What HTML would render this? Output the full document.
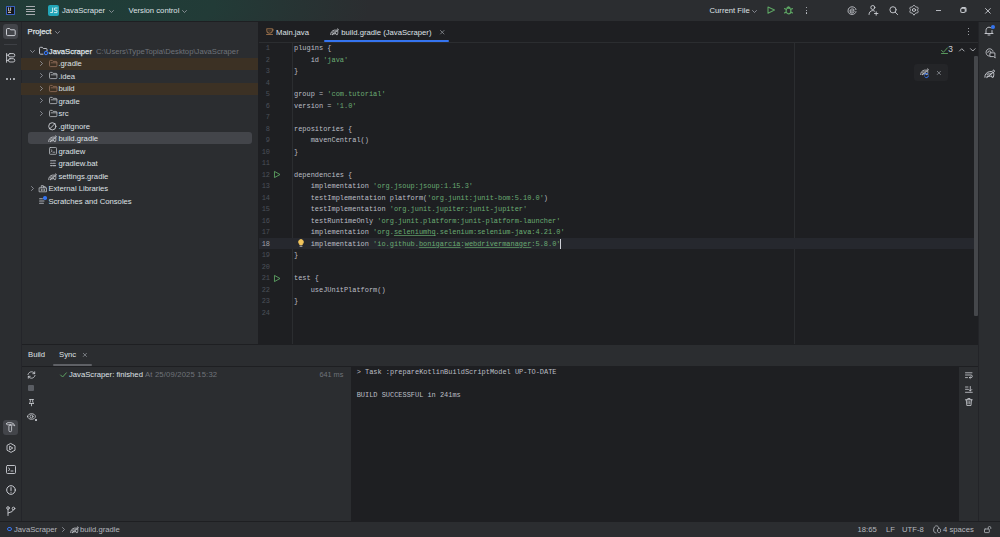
<!DOCTYPE html><html><head><meta charset="utf-8"><style>
*{margin:0;padding:0;box-sizing:border-box}
html,body{width:1000px;height:537px;overflow:hidden;background:#2B2D30;font-family:"Liberation Sans",sans-serif;font-size:7.7px;color:#DFE1E5}
.a{position:absolute}
.t{position:absolute;white-space:pre;line-height:8px;height:8px}
svg{position:absolute;overflow:visible}
svg *{fill:none;stroke-linecap:round;stroke-linejoin:round}
#title{left:0;top:0;width:1000px;height:22px;background:radial-gradient(ellipse 260px 75px at 110px 6px,#1f3d38 0%,#223b37 40%,#2B2D30 100%);border-bottom:1px solid #1E1F22}
#leftstrip{left:0;top:22px;width:22px;height:499px;background:#2B2D30;border-right:1px solid #24252A}
#proj{left:22px;top:22px;width:236px;height:322px;background:#2B2D30}
#editor{left:258px;top:22px;width:720px;height:322px;background:#1E1F22;border-left:1px solid #1E1F22}
#rightstrip{left:978px;top:22px;width:22px;height:499px;background:#2B2D30;border-left:1px solid #232428}
#bottom{left:22px;top:344px;width:956px;height:177px;background:#2B2D30;border-top:1px solid #1E1F22}
#console{left:351px;top:366px;width:607.5px;height:155px;background:#1E1F22}
#status{left:0;top:521px;width:1000px;height:16px;background:#2B2D30;border-top:1px solid #1E1F22}
.code{font-family:"Liberation Mono",monospace;font-size:6.95px;color:#BCBEC4}
.s{color:#6AAB73}
.ln{position:absolute;font-family:"Liberation Mono",monospace;font-size:6.95px;color:#4B5059;text-align:right;width:20px;line-height:8px;white-space:pre}
.g{color:#6F737A}
.ty{text-decoration:underline solid #4f7d57;text-decoration-thickness:1px;text-underline-offset:0.8px}
</style></head><body>
<div id="title" class="a"></div>
<div id="leftstrip" class="a"></div>
<div id="proj" class="a"></div>
<div id="editor" class="a"></div>
<div id="rightstrip" class="a"></div>
<div id="bottom" class="a"></div>
<div id="console" class="a"></div>
<div id="status" class="a"></div>
<div class="a" style="left:6px;top:6px;width:9px;height:9px;background:#141518;border:1px solid #3A62C0;border-radius:0.5px"></div>
<svg style="left:0px;top:0px" width="20" height="20" viewBox="0 0 20 20" stroke="#E6E6E6" stroke-width="0.8"><path d="M8.6 7.8 V10.8 M10.6 7.8 V10.5 Q10.6 11 10 11 H9.5"/></svg>
<div class="a" style="left:8px;top:12px;width:2.6px;height:0.9px;background:#C8B8A8"></div>
<div class="a" style="left:26.3px;top:6.2px;width:8.7px;height:1.2px;background:#A9ACB1"></div>
<div class="a" style="left:26.3px;top:8.9px;width:8.7px;height:1.2px;background:#A9ACB1"></div>
<div class="a" style="left:26.3px;top:11.2px;width:8.7px;height:1.2px;background:#A9ACB1"></div>
<div class="a" style="left:26.3px;top:13.5px;width:8.7px;height:1.2px;background:#A9ACB1"></div>
<div class="a" style="left:48px;top:5px;width:11px;height:10.7px;background:#22A6B8;border-radius:2px"></div>
<svg style="left:0px;top:0px" width="64" height="20" viewBox="0 0 64 20" stroke="#DDEFF1" stroke-width="0.9"><path d="M52.6 8 V12.5 H50.6 M57.1 8 H54.6 V10.3 H57 V12.6 H54.4"/></svg>
<div class="t " style="left:62px;top:6.5px;">JavaScraper</div>
<svg style="left:109px;top:9.5px" width="5" height="3" viewBox="0 0 5 3" stroke="#9DA0A8" stroke-width="0.8"><polyline points="0.5,0.5 2.5,2.5 4.5,0.5"/></svg>
<div class="t " style="left:128.5px;top:6.5px;">Version control</div>
<svg style="left:182px;top:9.5px" width="5" height="3" viewBox="0 0 5 3" stroke="#9DA0A8" stroke-width="0.8"><polyline points="0.5,0.5 2.5,2.5 4.5,0.5"/></svg>
<div class="t " style="left:709.5px;top:6.5px;">Current File</div>
<svg style="left:752px;top:9.5px" width="5" height="3" viewBox="0 0 5 3" stroke="#9DA0A8" stroke-width="0.8"><polyline points="0.5,0.5 2.5,2.5 4.5,0.5"/></svg>
<svg style="left:767px;top:6px" width="9" height="9" viewBox="0 0 9 9" stroke="#5DA463" stroke-width="1.1"><path d="M1 1 L7.5 4 L1 7.2 Z"/></svg>
<svg style="left:784px;top:6px" width="10" height="9" viewBox="0 0 10 9" stroke="#5DA463" stroke-width="1.2"><ellipse cx="4.5" cy="4.9" rx="2.4" ry="2.9"/><path d="M3.3 1.6 Q4.5 0.4 5.7 1.6 M2 3.3 L0.6 2.6 M7 3.3 L8.4 2.6 M2 6.2 L0.6 6.9 M7 6.2 L8.4 6.9" /><path d="M3.2 1.8 Q4.5 0.2 5.8 1.8 Z" style="fill:#5DA463"/></svg>
<div class="a" style="left:805.5px;top:6.8px;width:1.3px;height:1.3px;background:#C9CCD2;border-radius:1px"></div>
<div class="a" style="left:805.5px;top:9.6px;width:1.3px;height:1.3px;background:#C9CCD2;border-radius:1px"></div>
<div class="a" style="left:805.5px;top:12.4px;width:1.3px;height:1.3px;background:#C9CCD2;border-radius:1px"></div>
<svg style="left:846.8px;top:6.3px" width="10" height="9" viewBox="0 0 10 9" stroke="#CED0D6" stroke-width="0.85"><path d="M1 4.5 C1 2 3.3 0.8 5 0.8 C7 0.8 9 2 9 3.6 M3 4.6 C3 3.3 4.5 2.8 6 3 C7.5 3.2 7.5 4.8 6 5 H4 C2.5 5.2 2.6 6.7 4 6.9 C5.5 7.1 7 6.7 7.2 5.6 M1 5.4 C1.2 7.4 3 8.4 5 8.4 C7 8.4 8.8 7.4 9 5.6"/></svg>
<svg style="left:868px;top:5.3px" width="11" height="11" viewBox="0 0 11 11" stroke="#CED0D6" stroke-width="0.9"><circle cx="4.8" cy="2.5" r="2"/><path d="M1 9.5 C1 7.2 2.5 5.6 4.8 5.6 C5.5 5.6 6.2 5.8 6.6 6.1 M8.2 6.8 V10.2 M6.5 8.5 H9.9"/></svg>
<svg style="left:889px;top:6px" width="10" height="10" viewBox="0 0 10 10" stroke="#CED0D6" stroke-width="0.9"><circle cx="4" cy="3.8" r="3.1"/><path d="M6.3 6.2 L8.6 8.6"/></svg>
<svg style="left:909px;top:5.3px" width="10" height="10" viewBox="0 0 10 10" stroke="#CED0D6" stroke-width="0.9"><path d="M5.00 9.65 L4.60 9.56 L4.24 9.31 L3.94 8.96 L3.69 8.59 L3.47 8.28 L3.23 8.07 L2.92 7.97 L2.54 7.93 L2.10 7.90 L1.65 7.81 L1.25 7.62 L0.97 7.33 L0.85 6.93 L0.89 6.50 L1.04 6.06 L1.23 5.66 L1.39 5.32 L1.45 5.00 L1.39 4.68 L1.23 4.34 L1.04 3.94 L0.89 3.50 L0.85 3.07 L0.97 2.68 L1.25 2.38 L1.65 2.19 L2.10 2.10 L2.54 2.07 L2.92 2.03 L3.22 1.93 L3.47 1.72 L3.69 1.41 L3.94 1.04 L4.24 0.69 L4.60 0.44 L5.00 0.35 L5.40 0.44 L5.76 0.69 L6.06 1.04 L6.31 1.41 L6.53 1.72 L6.78 1.93 L7.08 2.03 L7.46 2.07 L7.90 2.10 L8.35 2.19 L8.75 2.38 L9.03 2.67 L9.15 3.07 L9.11 3.50 L8.96 3.94 L8.77 4.34 L8.61 4.68 L8.55 5.00 L8.61 5.32 L8.77 5.66 L8.96 6.06 L9.11 6.50 L9.15 6.93 L9.03 7.32 L8.75 7.62 L8.35 7.81 L7.90 7.90 L7.46 7.93 L7.08 7.97 L6.77 8.07 L6.53 8.28 L6.31 8.59 L6.06 8.96 L5.76 9.31 L5.40 9.56 L5.00 9.65Z"/><ellipse cx="5" cy="5" rx="1.7" ry="1.4"/></svg>
<div class="a" style="left:935.8px;top:9.6px;width:5.4px;height:1.4px;background:#B4B7BD"></div>
<svg style="left:959.8px;top:7.4px" width="7" height="6" viewBox="0 0 7 6" stroke="#C4C7CC" stroke-width="1.1"><rect x="0.7" y="1.3" width="4.6" height="4.2" rx="1.4"/><path d="M2 0.6 H4.8 Q6 0.6 6 1.8 V4.2"/></svg>
<svg style="left:984.6px;top:7.5px" width="6" height="6" viewBox="0 0 6 6" stroke="#CED0D6" stroke-width="0.9"><path d="M0.5 0.5 L5.3 5.3 M5.3 0.5 L0.5 5.3"/></svg>
<div class="a" style="left:3px;top:24px;width:15px;height:15px;background:#43454A;border-radius:3px"></div>
<svg style="left:5.5px;top:27.8px" width="10" height="9" viewBox="0 0 10 9" stroke="#CED0D6" stroke-width="1"><path d="M0.5 1.5 Q0.5 0.5 1.5 0.5 H3.6 L4.6 1.8 H8.2 Q9.2 1.8 9.2 2.8 V6.6 Q9.2 7.6 8.2 7.6 H1.5 Q0.5 7.6 0.5 6.6 Z"/></svg>
<div class="a" style="left:4px;top:44px;width:13px;height:1px;background:#3E4045"></div>
<svg style="left:6px;top:53.3px" width="10" height="10" viewBox="0 0 10 10" stroke="#CED0D6" stroke-width="0.9"><path d="M0.6 0.5 V9.3 M0.6 2.2 H2.4 M0.6 7.4 H2.4"/><rect x="2.4" y="0.6" width="6.4" height="3.3" rx="1.65"/><rect x="2.4" y="5.7" width="6.4" height="3.3" rx="1.65"/></svg>
<div class="a" style="left:6px;top:78px;width:1.9px;height:1.9px;background:#CED0D6;border-radius:1px"></div>
<div class="a" style="left:9.6px;top:78px;width:1.9px;height:1.9px;background:#CED0D6;border-radius:1px"></div>
<div class="a" style="left:13.2px;top:78px;width:1.9px;height:1.9px;background:#CED0D6;border-radius:1px"></div>
<div class="a" style="left:3px;top:420px;width:15px;height:15px;background:#43454A;border-radius:3px"></div>
<svg style="left:6px;top:422px" width="10" height="11" viewBox="0 0 10 11" stroke="#CED0D6" stroke-width="0.85"><path d="M0.6 1.8 Q0.6 0.7 1.6 0.7 H5 Q8 0.9 8.8 3.8 Q7.2 2.7 5.6 2.8 H1.6 Q0.6 2.8 0.6 1.8 Z"/><rect x="2.9" y="2.9" width="2.7" height="6.8" rx="1.3"/></svg>
<svg style="left:5.5px;top:443px" width="10" height="10" viewBox="0 0 10 10" stroke="#CED0D6" stroke-width="0.9"><path d="M5 0.6 L9 2.8 V7.2 L5 9.4 L1 7.2 V2.8 Z"/><path d="M4 3.3 L6.8 5 L4 6.7 Z"/></svg>
<svg style="left:5.5px;top:464.5px" width="10" height="9" viewBox="0 0 10 9" stroke="#CED0D6" stroke-width="0.9"><rect x="0.5" y="0.5" width="9" height="8" rx="1"/><path d="M2.5 3 L4 4.3 L2.5 5.6 M5 6 H7"/></svg>
<svg style="left:5.5px;top:485px" width="10" height="10" viewBox="0 0 10 10" stroke="#CED0D6" stroke-width="1"><circle cx="5" cy="5" r="4.3"/><path d="M5 2.6 V5.5 M5 7.2 V7.3"/></svg>
<svg style="left:6px;top:505.5px" width="10" height="10" viewBox="0 0 10 10" stroke="#CED0D6" stroke-width="0.9"><circle cx="2" cy="2" r="1.3"/><circle cx="7.5" cy="2.5" r="1.3"/><path d="M2 3.3 V9.5 M7.5 3.8 Q7.5 6 2.2 7"/></svg>
<div class="t " style="left:27.5px;top:28px;font-size:7.7px;-webkit-text-stroke:0.25px #DFE1E5">Project</div>
<svg style="left:55px;top:30.8px" width="5" height="3" viewBox="0 0 5 3" stroke="#9DA0A8" stroke-width="0.8"><polyline points="0.5,0.5 2.5,2.5 4.5,0.5"/></svg>
<div class="a" style="left:21px;top:57.5px;width:237px;height:12.5px;background:#3C3124"></div>
<div class="a" style="left:21px;top:82.5px;width:237px;height:12.5px;background:#3C3124"></div>
<div class="a" style="left:28px;top:132.2px;width:224px;height:12.3px;background:#43454A;border-radius:3px"></div>
<svg style="left:30px;top:49.5px" width="5" height="3" viewBox="0 0 5 3" stroke="#9DA0A8" stroke-width="0.8"><polyline points="0.5,0.5 2.5,2.5 4.5,0.5"/></svg>
<svg style="left:39px;top:47.1px" width="10" height="8" viewBox="0 0 10 8" stroke="#CED0D6" stroke-width="0.9"><path d="M4 7.2 H1.5 Q0.5 7.2 0.5 6.2 V1.3 Q0.5 0.3 1.5 0.3 H3.3 L4.3 1.5 H7 Q8 1.5 8 2.5 V3.8"/></svg>
<svg style="left:43.6px;top:50.900000000000006px" width="5" height="5" viewBox="0 0 5 5" stroke="#3574F0" stroke-width="1.1"><circle cx="2" cy="2" r="1.6"/></svg>
<div class="t " style="left:48.8px;top:47.5px;font-size:7.7px;-webkit-text-stroke:0.25px #DFE1E5">JavaScraper</div>
<div class="t g" style="left:96px;top:47.7px;">C:\Users\TypeTopia\Desktop\JavaScraper</div>
<svg style="left:39.8px;top:60.900000000000006px" width="3" height="5" viewBox="0 0 3 5" stroke="#9DA0A8" stroke-width="0.8"><polyline points="0.5,0.5 2.5,2.5 0.5,4.5"/></svg>
<svg style="left:48.5px;top:59.900000000000006px" width="9" height="7" viewBox="0 0 9 7" stroke="#94705A" stroke-width="0.8"><path d="M0.5 1.3 Q0.5 0.4 1.4 0.4 H3.2 L4.1 1.4 H7 Q7.9 1.4 7.9 2.3 V5.7 Q7.9 6.6 7 6.6 H1.4 Q0.5 6.6 0.5 5.7 Z M2.2 2.8 H7.9"/></svg>
<div class="t " style="left:58.4px;top:60.0px;color:#DFE1E5">.gradle</div>
<svg style="left:39.8px;top:73.4px" width="3" height="5" viewBox="0 0 3 5" stroke="#9DA0A8" stroke-width="0.8"><polyline points="0.5,0.5 2.5,2.5 0.5,4.5"/></svg>
<svg style="left:48.5px;top:72.4px" width="9" height="7" viewBox="0 0 9 7" stroke="#B9BCC2" stroke-width="0.8"><path d="M0.5 1.3 Q0.5 0.4 1.4 0.4 H3.2 L4.1 1.4 H7 Q7.9 1.4 7.9 2.3 V5.7 Q7.9 6.6 7 6.6 H1.4 Q0.5 6.6 0.5 5.7 Z M2.2 2.8 H7.9"/></svg>
<div class="t " style="left:58.4px;top:72.5px;color:#DFE1E5">.idea</div>
<svg style="left:39.8px;top:85.9px" width="3" height="5" viewBox="0 0 3 5" stroke="#9DA0A8" stroke-width="0.8"><polyline points="0.5,0.5 2.5,2.5 0.5,4.5"/></svg>
<svg style="left:48.5px;top:84.9px" width="9" height="7" viewBox="0 0 9 7" stroke="#94705A" stroke-width="0.8"><path d="M0.5 1.3 Q0.5 0.4 1.4 0.4 H3.2 L4.1 1.4 H7 Q7.9 1.4 7.9 2.3 V5.7 Q7.9 6.6 7 6.6 H1.4 Q0.5 6.6 0.5 5.7 Z M2.2 2.8 H7.9"/></svg>
<div class="t " style="left:58.4px;top:85.0px;color:#DFE1E5">build</div>
<svg style="left:39.8px;top:98.4px" width="3" height="5" viewBox="0 0 3 5" stroke="#9DA0A8" stroke-width="0.8"><polyline points="0.5,0.5 2.5,2.5 0.5,4.5"/></svg>
<svg style="left:48.5px;top:97.4px" width="9" height="7" viewBox="0 0 9 7" stroke="#B9BCC2" stroke-width="0.8"><path d="M0.5 1.3 Q0.5 0.4 1.4 0.4 H3.2 L4.1 1.4 H7 Q7.9 1.4 7.9 2.3 V5.7 Q7.9 6.6 7 6.6 H1.4 Q0.5 6.6 0.5 5.7 Z M2.2 2.8 H7.9"/></svg>
<div class="t " style="left:58.4px;top:97.5px;color:#DFE1E5">gradle</div>
<svg style="left:39.8px;top:110.9px" width="3" height="5" viewBox="0 0 3 5" stroke="#9DA0A8" stroke-width="0.8"><polyline points="0.5,0.5 2.5,2.5 0.5,4.5"/></svg>
<svg style="left:48.5px;top:109.9px" width="9" height="7" viewBox="0 0 9 7" stroke="#B9BCC2" stroke-width="0.8"><path d="M0.5 1.3 Q0.5 0.4 1.4 0.4 H3.2 L4.1 1.4 H7 Q7.9 1.4 7.9 2.3 V5.7 Q7.9 6.6 7 6.6 H1.4 Q0.5 6.6 0.5 5.7 Z M2.2 2.8 H7.9"/></svg>
<div class="t " style="left:58.4px;top:110.0px;color:#DFE1E5">src</div>
<svg style="left:48px;top:121.7px" width="9" height="9" viewBox="0 0 9 9" stroke="#CED0D6" stroke-width="0.9"><circle cx="4.3" cy="4.3" r="3.6"/><path d="M1.8 6.8 L6.8 1.8"/></svg>
<div class="t " style="left:58.4px;top:122.5px;color:#DFE1E5">.gitignore</div>
<svg style="left:48px;top:135.2px" width="10" height="8" viewBox="0 0 10 8" stroke="#CED0D6" stroke-width="0.8"><path d="M0.7 6.6 C0.5 4.3 2.2 2.4 4.6 2.1 C6 1.9 7 2.3 7.6 2.9 C8.4 2.4 8.6 1.4 8 0.9 C7.6 0.6 7.1 0.9 7.2 1.3 M7.6 2.9 C8.1 3.6 7.9 5.2 7.4 6.6 H6.3 L6 5.5 C4.8 6 3.7 6 2.7 5.6 L2.3 6.6 Z M2.5 4.2 C3.5 3.6 5 4.2 6 3.8"/></svg>
<div class="t " style="left:58.4px;top:135.0px;color:#DFE1E5">build.gradle</div>
<svg style="left:48.5px;top:147.1px" width="9" height="9" viewBox="0 0 9 9" stroke="#B9BCC2" stroke-width="0.8"><rect x="0.5" y="0.5" width="7" height="6.8" rx="0.8"/><path d="M2 2.6 L3.2 3.7 L2 4.8 M4 5.2 H5.8"/></svg>
<div class="t " style="left:58.4px;top:147.5px;color:#DFE1E5">gradlew</div>
<svg style="left:49.7px;top:159.89999999999998px" width="8" height="8" viewBox="0 0 8 8" stroke="#A9ACB2" stroke-width="1.1"><path d="M0.6 0.8 H5.6 M0.6 3.2 H2.2 M3.2 3.2 H5.2 M0.6 5.6 H2.2 M3.2 5.6 H5.6"/></svg>
<div class="t " style="left:58.4px;top:160.0px;color:#DFE1E5">gradlew.bat</div>
<svg style="left:48px;top:172.7px" width="10" height="8" viewBox="0 0 10 8" stroke="#CED0D6" stroke-width="0.8"><path d="M0.7 6.6 C0.5 4.3 2.2 2.4 4.6 2.1 C6 1.9 7 2.3 7.6 2.9 C8.4 2.4 8.6 1.4 8 0.9 C7.6 0.6 7.1 0.9 7.2 1.3 M7.6 2.9 C8.1 3.6 7.9 5.2 7.4 6.6 H6.3 L6 5.5 C4.8 6 3.7 6 2.7 5.6 L2.3 6.6 Z M2.5 4.2 C3.5 3.6 5 4.2 6 3.8"/></svg>
<div class="t " style="left:58.4px;top:172.5px;color:#DFE1E5">settings.gradle</div>
<svg style="left:38.5px;top:184.6px" width="9" height="8" viewBox="0 0 9 8" stroke="#B9BCC2" stroke-width="0.8"><path d="M0.5 2.8 H7.5 V6.8 H0.5 Z M2.3 2.8 V0.6 H4.3 V2.8 M4.3 1.6 H6.2 V2.8 M2.4 4.3 V5.6 M4 4.3 V5.6 M5.6 4.3 V5.6"/></svg>
<div class="t " style="left:48.4px;top:185.0px;color:#DFE1E5">External Libraries</div>
<svg style="left:30.5px;top:185.7px" width="3" height="5" viewBox="0 0 3 5" stroke="#9DA0A8" stroke-width="0.8"><polyline points="0.5,0.5 2.5,2.5 0.5,4.5"/></svg>
<svg style="left:39.3px;top:197.7px" width="8" height="8" viewBox="0 0 8 8" stroke="#A9ACB2" stroke-width="1.1"><path d="M0.6 0.8 H3.4 M0.6 3 H5 M0.6 5.2 H4.4"/></svg>
<div class="a" style="left:43px;top:196.1px;width:3.6px;height:3.6px;background:#3574F0;border-radius:50%"></div>
<div class="t " style="left:48.4px;top:197.5px;color:#DFE1E5">Scratches and Consoles</div>
<svg style="left:266px;top:28px" width="8" height="8" viewBox="0 0 8 8" stroke="#8E6846" stroke-width="1.1"><path d="M0.8 0.7 H6.3 V2.6 Q6.3 5.2 3.55 5.2 Q0.8 5.2 0.8 2.6 Z M6.3 1 Q7.4 1.2 6.9 2.6 M0.6 6.5 H6.5"/><path d="M2 1.8 H5.1 Q5 4 3.55 4 Q2.1 4 2 1.8Z" style="fill:#4a3a2c" stroke="none"/></svg>
<div class="t " style="left:276px;top:28.5px;color:#DFE1E5">Main.java</div>
<svg style="left:330px;top:28px" width="10" height="8" viewBox="0 0 10 8" stroke="#CED0D6" stroke-width="0.8"><path d="M0.7 6.6 C0.5 4.3 2.2 2.4 4.6 2.1 C6 1.9 7 2.3 7.6 2.9 C8.4 2.4 8.6 1.4 8 0.9 C7.6 0.6 7.1 0.9 7.2 1.3 M7.6 2.9 C8.1 3.6 7.9 5.2 7.4 6.6 H6.3 L6 5.5 C4.8 6 3.7 6 2.7 5.6 L2.3 6.6 Z M2.5 4.2 C3.5 3.6 5 4.2 6 3.8"/></svg>
<div class="t " style="left:341.3px;top:28.5px;color:#DFE1E5">build.gradle (JavaScraper)</div>
<svg style="left:439.5px;top:29.5px" width="5" height="5" viewBox="0 0 5 5" stroke="#8C8F96" stroke-width="0.8"><path d="M0.5 0.5 L4 4 M4 0.5 L0.5 4"/></svg>
<div class="a" style="left:324px;top:40.3px;width:125px;height:2px;background:#3574F0;border-radius:1px"></div>
<div class="a" style="left:259px;top:42px;width:719px;height:1px;background:#2B2D30"></div>
<div class="a" style="left:967.5px;top:28px;width:1.2px;height:1.2px;background:#C9CCD2;border-radius:1px"></div>
<div class="a" style="left:967.5px;top:30.8px;width:1.2px;height:1.2px;background:#C9CCD2;border-radius:1px"></div>
<div class="a" style="left:967.5px;top:33.6px;width:1.2px;height:1.2px;background:#C9CCD2;border-radius:1px"></div>
<div class="a" style="left:292px;top:43px;width:1px;height:301px;background:#2B2D30"></div>
<div class="a" style="left:794px;top:43px;width:1px;height:301px;background:#2B2D30"></div>
<div class="a" style="left:259px;top:237.75px;width:715px;height:11.5px;background:#26282E"></div>
<div class="ln" style="left:250px;top:44.0px;color:#4B5059">1</div>
<div class="t code" style="left:294px;top:44.0px">plugins {</div>
<div class="ln" style="left:250px;top:55.5px;color:#4B5059">2</div>
<div class="t code" style="left:294px;top:55.5px">    id <span class="s">'java'</span></div>
<div class="ln" style="left:250px;top:67.0px;color:#4B5059">3</div>
<div class="t code" style="left:294px;top:67.0px">}</div>
<div class="ln" style="left:250px;top:78.5px;color:#4B5059">4</div>
<div class="ln" style="left:250px;top:90.0px;color:#4B5059">5</div>
<div class="t code" style="left:294px;top:90.0px">group = <span class="s">'com.tutorial'</span></div>
<div class="ln" style="left:250px;top:101.5px;color:#4B5059">6</div>
<div class="t code" style="left:294px;top:101.5px">version = <span class="s">'1.0'</span></div>
<div class="ln" style="left:250px;top:113.0px;color:#4B5059">7</div>
<div class="ln" style="left:250px;top:124.5px;color:#4B5059">8</div>
<div class="t code" style="left:294px;top:124.5px">repositories {</div>
<div class="ln" style="left:250px;top:136.0px;color:#4B5059">9</div>
<div class="t code" style="left:294px;top:136.0px">    mavenCentral()</div>
<div class="ln" style="left:250px;top:147.5px;color:#4B5059">10</div>
<div class="t code" style="left:294px;top:147.5px">}</div>
<div class="ln" style="left:250px;top:159.0px;color:#4B5059">11</div>
<div class="ln" style="left:250px;top:170.5px;color:#4B5059">12</div>
<div class="t code" style="left:294px;top:170.5px">dependencies {</div>
<div class="ln" style="left:250px;top:182.0px;color:#4B5059">13</div>
<div class="t code" style="left:294px;top:182.0px">    implementation <span class="s">'org.jsoup:jsoup:1.15.3'</span></div>
<div class="ln" style="left:250px;top:193.5px;color:#4B5059">14</div>
<div class="t code" style="left:294px;top:193.5px">    testImplementation platform(<span class="s">'org.junit:junit-bom:5.10.0'</span>)</div>
<div class="ln" style="left:250px;top:205.0px;color:#4B5059">15</div>
<div class="t code" style="left:294px;top:205.0px">    testImplementation <span class="s">'org.junit.jupiter:junit-jupiter'</span></div>
<div class="ln" style="left:250px;top:216.5px;color:#4B5059">16</div>
<div class="t code" style="left:294px;top:216.5px">    testRuntimeOnly <span class="s">'org.junit.platform:junit-platform-launcher'</span></div>
<div class="ln" style="left:250px;top:228.0px;color:#4B5059">17</div>
<div class="t code" style="left:294px;top:228.0px">    implementation <span class="s">'org.<span class="ty">seleniumhq</span>.selenium:selenium-java:4.21.0'</span></div>
<div class="ln" style="left:250px;top:239.5px;color:#A1A3AB">18</div>
<div class="t code" style="left:294px;top:239.5px">    implementation <span class="s">'io.github.<span class="ty">bonigarcia</span>:<span class="ty">webdrivermanager</span>:5.8.0'</span></div>
<div class="ln" style="left:250px;top:251.0px;color:#4B5059">19</div>
<div class="t code" style="left:294px;top:251.0px">}</div>
<div class="ln" style="left:250px;top:262.5px;color:#4B5059">20</div>
<div class="ln" style="left:250px;top:274.0px;color:#4B5059">21</div>
<div class="t code" style="left:294px;top:274.0px">test {</div>
<div class="ln" style="left:250px;top:285.5px;color:#4B5059">22</div>
<div class="t code" style="left:294px;top:285.5px">    useJUnitPlatform()</div>
<div class="ln" style="left:250px;top:297.0px;color:#4B5059">23</div>
<div class="t code" style="left:294px;top:297.0px">}</div>
<div class="ln" style="left:250px;top:308.5px;color:#4B5059">24</div>
<div class="a" style="left:560px;top:238.5px;width:1px;height:10px;background:#CED0D6"></div>
<svg style="left:274px;top:171.0px" width="7" height="7" viewBox="0 0 7 7" stroke="#5DA463" stroke-width="0.9"><path d="M0.8 0.6 L6 3.5 L0.8 6.4 Z"/></svg>
<svg style="left:274px;top:274.5px" width="7" height="7" viewBox="0 0 7 7" stroke="#5DA463" stroke-width="0.9"><path d="M0.8 0.6 L6 3.5 L0.8 6.4 Z"/></svg>
<svg style="left:297.5px;top:239.0px" width="6" height="9" viewBox="0 0 6 9" stroke="#F2C55C" stroke-width="0.6"><path d="M3 0.5 C1.3 0.5 0.5 1.8 0.5 3 C0.5 4.3 1.6 5 1.8 6 H4.2 C4.4 5 5.5 4.3 5.5 3 C5.5 1.8 4.7 0.5 3 0.5 Z" style="fill:#F2C55C"/><path d="M2 7.3 H4" stroke="#A8A9AD" stroke-width="1"/></svg>
<svg style="left:941px;top:46.5px" width="7" height="7" viewBox="0 0 7 7" stroke="#5DA463" stroke-width="0.9"><path d="M0.5 3.5 L2.5 5.2 L6.5 0.8 M0.5 6.5 H6.5"/></svg>
<div class="t " style="left:948.3px;top:45px;color:#CED0D6;font-size:8.4px">3</div>
<svg style="left:959px;top:48px" width="6" height="4" viewBox="0 0 6 4" stroke="#CED0D6" stroke-width="0.8"><polyline points="0.5,3 2.8,0.7 5.1,3"/></svg>
<svg style="left:970px;top:48px" width="6" height="4" viewBox="0 0 6 4" stroke="#CED0D6" stroke-width="0.8"><polyline points="0.5,0.7 2.8,3 5.1,0.7"/></svg>
<div class="a" style="left:974px;top:56px;width:4px;height:260px;background:#45474B;border-radius:1px"></div>
<div class="a" style="left:914px;top:63.5px;width:34px;height:17.5px;background:#242528;border-radius:3px"></div>
<svg style="left:919.5px;top:68px" width="10" height="8" viewBox="0 0 10 8" stroke="#CED0D6" stroke-width="0.8"><path d="M0.7 6.6 C0.5 4.3 2.2 2.4 4.6 2.1 C6 1.9 7 2.3 7.6 2.9 C8.4 2.4 8.6 1.4 8 0.9 C7.6 0.6 7.1 0.9 7.2 1.3 M7.6 2.9 C8.1 3.6 7.9 5.2 7.4 6.6 H6.3 L6 5.5 C4.8 6 3.7 6 2.7 5.6 L2.3 6.6 Z M2.5 4.2 C3.5 3.6 5 4.2 6 3.8"/></svg>
<svg style="left:924px;top:72.5px" width="5" height="5" viewBox="0 0 5 5" stroke="#3574F0" stroke-width="1"><path d="M0.6 2 A2 2 0 0 1 4.2 1.2 M4.4 3 A2 2 0 0 1 0.8 3.8"/></svg>
<svg style="left:936.5px;top:70.5px" width="4" height="4" viewBox="0 0 4 4" stroke="#8C8F96" stroke-width="0.8"><path d="M0.3 0.3 L3.5 3.5 M3.5 0.3 L0.3 3.5"/></svg>
<svg style="left:984px;top:25.5px" width="10" height="10" viewBox="0 0 10 10" stroke="#CED0D6" stroke-width="0.9"><path d="M2 7.5 V4.5 C2 2.5 3.3 1.2 5 1.2 C6 1.2 6.5 1.5 7 2 M8 4.5 V7.5 M1 7.5 H9 M4 9 H6"/></svg>
<div class="a" style="left:990.5px;top:25px;width:4px;height:4px;background:#3574F0;border-radius:50%"></div>
<svg style="left:984.5px;top:47.5px" width="11" height="11" viewBox="0 0 11 11" stroke="#CED0D6" stroke-width="0.85"><path d="M1 4.5 C1 2.2 2.8 0.8 4.5 0.8 C6.2 0.8 7.8 1.8 8 3.3 M2.8 4.5 C2.8 3.5 3.7 2.9 4.8 3 C5.8 3.1 6.2 4 5.8 4.6 M1.2 5.5 C1.6 7.2 2.8 8 4.2 8"/><path d="M5.3 4.9 H9.9 V8.6 L10.3 9.8 L8.6 8.6 H5.3 Z" style="fill:#1E1F22"/></svg>
<svg style="left:984px;top:68.5px" width="12" height="10" viewBox="0 0 9.6 8" stroke="#CED0D6" stroke-width="0.75"><path d="M0.7 6.6 C0.5 4.3 2.2 2.4 4.6 2.1 C6 1.9 7 2.3 7.6 2.9 C8.4 2.4 8.6 1.4 8 0.9 C7.6 0.6 7.1 0.9 7.2 1.3 M7.6 2.9 C8.1 3.6 7.9 5.2 7.4 6.6 H6.3 L6 5.5 C4.8 6 3.7 6 2.7 5.6 L2.3 6.6 Z M2.5 4.2 C3.5 3.6 5 4.2 6 3.8"/></svg>
<div class="t " style="left:28px;top:351px;color:#DFE1E5">Build</div>
<div class="t " style="left:59px;top:351px;color:#DFE1E5">Sync</div>
<svg style="left:82.5px;top:353px" width="4" height="4" viewBox="0 0 4 4" stroke="#8C8F96" stroke-width="0.8"><path d="M0.3 0.3 L3.5 3.5 M3.5 0.3 L0.3 3.5"/></svg>
<div class="a" style="left:53px;top:364px;width:39px;height:1.6px;background:#5F6166;border-radius:1px"></div>
<div class="a" style="left:22px;top:365.5px;width:956px;height:1px;background:#1E1F22"></div>
<svg style="left:27px;top:371px" width="9" height="8" viewBox="0 0 9 8" stroke="#CED0D6" stroke-width="0.85"><path d="M1 3.5 C1.5 1.8 3 0.8 4.5 0.8 C5.8 0.8 7 1.5 7.6 2.5 M8 4.5 C7.5 6.2 6 7.2 4.5 7.2 C3.2 7.2 2 6.5 1.4 5.5 M7.7 0.8 V2.7 H5.8 M1.3 7.2 V5.3 H3.2"/></svg>
<div class="a" style="left:28px;top:385px;width:6px;height:6px;background:#5A5D63;border-radius:1px"></div>
<svg style="left:28px;top:399px" width="7" height="7" viewBox="0 0 7 7" stroke="#CED0D6" stroke-width="0.8"><path d="M1.5 0.5 H5.5 M2.3 0.5 V3.3 L1 4.5 H6 L4.7 3.3 V0.5 M3.5 4.5 V6.8"/></svg>
<svg style="left:27px;top:413px" width="10" height="8" viewBox="0 0 10 8" stroke="#CED0D6" stroke-width="0.8"><path d="M0.6 3.5 C0.6 1.8 2.5 0.7 4.5 0.7 C6.5 0.7 8.4 1.8 8.4 3.5 C8.4 5.2 6.5 6.3 4.5 6.3 C2.5 6.3 0.6 5.2 0.6 3.5 Z"/><circle cx="4.5" cy="3.5" r="1.5"/></svg>
<div class="a" style="left:35px;top:419px;width:1.6px;height:1.6px;background:#CED0D6;border-radius:50%"></div>
<svg style="left:60px;top:371.5px" width="7" height="6" viewBox="0 0 7 6" stroke="#5DA463" stroke-width="1"><path d="M0.6 3 L2.6 5 L6.4 0.8"/></svg>
<div class="t " style="left:69px;top:370.7px;color:#DFE1E5">JavaScraper: finished</div>
<div class="t g" style="left:145px;top:370.7px;letter-spacing:0.16px">At 25/09/2025 15:32</div>
<div class="t g" style="left:319.4px;top:370.7px;font-size:7.3px">641 ms</div>
<div class="t code" style="left:356.7px;top:368px">&gt; Task :prepareKotlinBuildScriptModel UP-TO-DATE</div>
<div class="t code" style="left:356.7px;top:391px">BUILD SUCCESSFUL in 241ms</div>
<svg style="left:965px;top:372px" width="8" height="7" viewBox="0 0 8 7" stroke="#CED0D6" stroke-width="0.8"><path d="M0.5 0.8 H7 M0.5 3 H6 Q7.3 3 7.3 4.3 Q7.3 5.6 6 5.6 H4.5 M0.5 5.6 H2.5 M5.2 4.8 L4.3 5.6 L5.2 6.4"/></svg>
<svg style="left:965px;top:385.5px" width="8" height="7" viewBox="0 0 8 7" stroke="#CED0D6" stroke-width="0.8"><path d="M0.5 1 H3 M0.5 3.3 H3 M0.5 6.3 H7.3 M5.3 0.5 V5 M3.8 3.5 L5.3 5 L6.8 3.5"/></svg>
<svg style="left:965px;top:398px" width="8" height="8" viewBox="0 0 8 8" stroke="#CED0D6" stroke-width="0.8"><path d="M0.5 1.8 H7.3 M2.8 1.8 V0.5 H5 V1.8 M1.3 1.8 L1.8 7.5 H6 L6.5 1.8 M3 3.5 V5.8 M4.8 3.5 V5.8"/></svg>
<div class="a" style="left:7px;top:526.5px;width:4.5px;height:4.5px;border:1.1px solid #3574F0;border-radius:50%"></div>
<div class="t " style="left:14px;top:526px;color:#B4B7BD">JavaScraper</div>
<svg style="left:62px;top:526.5px" width="3" height="5" viewBox="0 0 3 5" stroke="#9DA0A8" stroke-width="0.8"><polyline points="0.5,0.5 2.5,2.5 0.5,4.5"/></svg>
<svg style="left:70px;top:525.5px" width="10" height="8" viewBox="0 0 10 8" stroke="#CED0D6" stroke-width="0.8"><path d="M0.7 6.6 C0.5 4.3 2.2 2.4 4.6 2.1 C6 1.9 7 2.3 7.6 2.9 C8.4 2.4 8.6 1.4 8 0.9 C7.6 0.6 7.1 0.9 7.2 1.3 M7.6 2.9 C8.1 3.6 7.9 5.2 7.4 6.6 H6.3 L6 5.5 C4.8 6 3.7 6 2.7 5.6 L2.3 6.6 Z M2.5 4.2 C3.5 3.6 5 4.2 6 3.8"/></svg>
<div class="t " style="left:80px;top:526px;color:#B4B7BD">build.gradle</div>
<div class="t " style="left:857.5px;top:526px;color:#B4B7BD">18:65</div>
<div class="t " style="left:886px;top:526px;color:#B4B7BD">LF</div>
<div class="t " style="left:902px;top:526px;color:#B4B7BD">UTF-8</div>
<svg style="left:933px;top:525px" width="8" height="9" viewBox="0 0 8 9" stroke="#B4B7BD" stroke-width="0.8"><path d="M3 8 C1.2 8 0.6 6.5 0.6 5 C0.6 2.5 2 0.8 3.5 0.8 C4.5 0.8 5.5 1.5 5.8 3 M4.5 5.5 A1.6 1.6 0 1 0 7.5 5.5 A1.6 1.6 0 1 0 4.5 5.5"/></svg>
<div class="t " style="left:943px;top:526px;color:#B4B7BD">4 spaces</div>
<svg style="left:983.5px;top:525.5px" width="8" height="7" viewBox="0 0 8 7" stroke="#B4B7BD" stroke-width="0.8"><rect x="0.5" y="3" width="4.8" height="3.6" rx="0.6"/><path d="M4.2 3 V1.8 Q4.2 0.5 5.5 0.5 Q6.8 0.5 6.8 1.8 V2.5"/></svg>
</body></html>
